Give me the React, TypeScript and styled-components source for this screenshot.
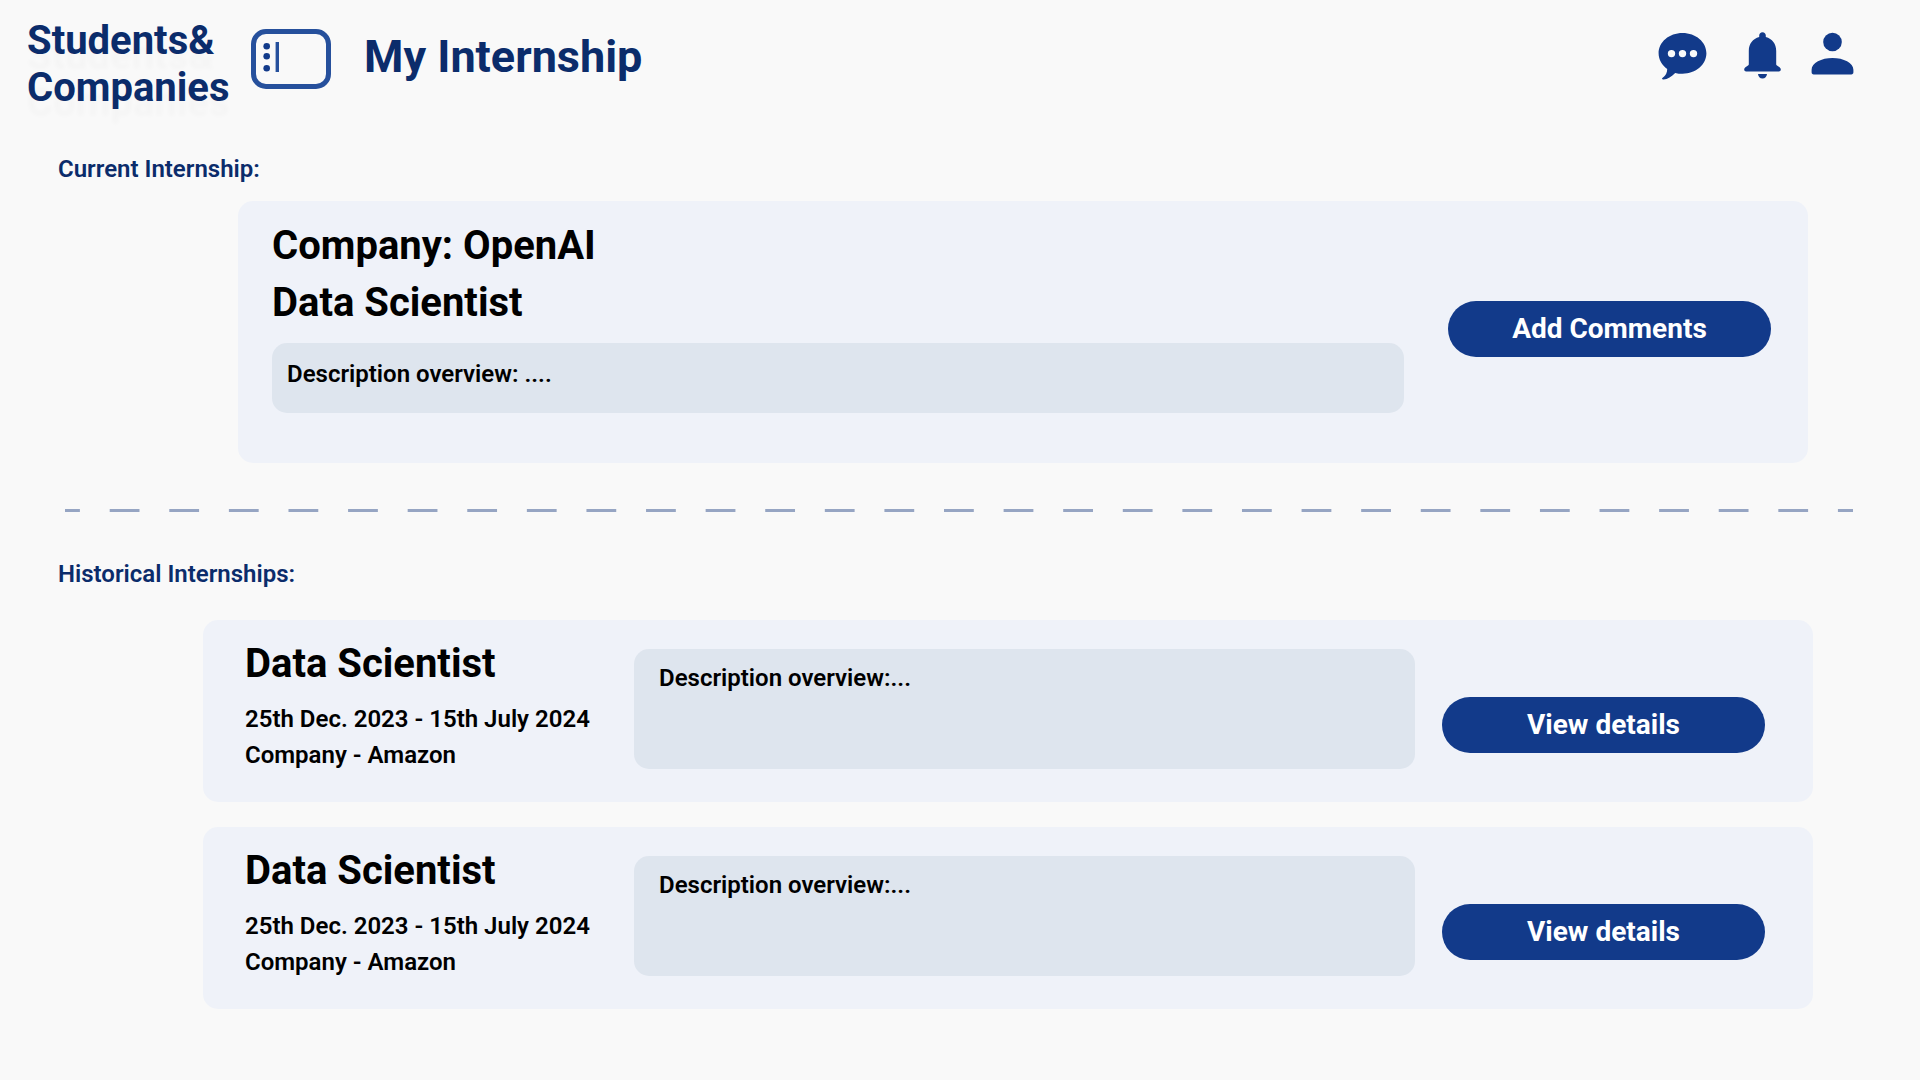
import React from "react";
import styled, { createGlobalStyle } from "styled-components";

const color = {
  page: "#f9f9f9",
  navy: "#0b2c6b",
  blue: "#123a8a",
  outline: "#26509c",
  card: "#eff2f9",
  panel: "#dee5ee",
  dash: "#96a5c3",
  text: "#000000",
};

const GlobalStyle = createGlobalStyle`
  *, *::before, *::after { box-sizing: border-box; }
  body {
    margin: 0;
    background: ${color.page};
    color: ${color.text};
    font-family: Roboto, "Liberation Sans", sans-serif;
  }
  h1, h2, h3, p { margin: 0; }
`;

const Header = styled.header`
  display: flex;
  align-items: flex-start;
  padding: 17px 66px 0 27px;
`;

const Brand = styled.p`
  width: 224px;
  color: ${color.navy};
  font-size: 40px;
  font-weight: 700;
  line-height: 47px;
  text-shadow: 0 15px 4px rgba(0, 0, 0, 0.02);
`;

const IconButton = styled.button`
  display: block;
  padding: 0;
  border: 0;
  background: none;
  color: ${color.blue};
  cursor: pointer;

  svg {
    display: block;
  }
`;

const MenuSlot = styled.div`
  margin: 12px 33px 0 0;
`;

const PageTitle = styled.h1`
  margin-top: 13px;
  color: ${color.navy};
  font-size: 45px;
  font-weight: 700;
  line-height: 54px;
`;

const Actions = styled.nav`
  display: flex;
  gap: 30px;
  margin: 15px 0 0 auto;
`;

const Section = styled.section`
  padding-top: ${(p: { $top: number }) => p.$top}px;
`;

const SectionTitle = styled.h2`
  padding-left: 58px;
  color: ${color.navy};
  font-size: 24px;
  font-weight: 600;
  line-height: 28px;
`;

const Divider = styled.hr`
  height: 3px;
  margin: 46px 67px 0 65px;
  border: 0;
  background-image: linear-gradient(
    90deg,
    ${color.dash} 15px,
    transparent 15px,
    transparent calc(100% - 15px),
    ${color.dash} calc(100% - 15px)
  );
  background-size: 60px 3px;
  background-repeat: round no-repeat;
`;

const Card = styled.article`
  display: flex;
  align-items: flex-start;
  border-radius: 15px;
  background: ${color.card};
`;

const CurrentCard = styled(Card)`
  gap: 44px;
  margin: 18px 112px 0 238px;
  padding: 16px 37px 50px 34px;
`;

const CurrentBody = styled.div`
  flex: 1;
`;

const CurrentHeading = styled.h3`
  font-size: 40px;
  font-weight: 700;
  line-height: 57px;
`;

const Overview = styled.p`
  border-radius: 15px;
  background: ${color.panel};
  font-size: 24px;
  font-weight: 600;
  line-height: 28px;
`;

const CurrentOverview = styled(Overview)`
  margin-top: 12px;
  padding: 17px 15px 25px;
`;

const PillButton = styled.button`
  width: 323px;
  height: 56px;
  margin-top: ${(p: { $top: number }) => p.$top}px;
  padding: 0;
  border: 0;
  border-radius: 28px;
  background: ${color.blue};
  color: #ffffff;
  font-family: inherit;
  font-size: 28px;
  font-weight: 700;
  line-height: 32px;
  cursor: pointer;
`;

const HistoryList = styled.div`
  display: grid;
  gap: 25px;
  margin: 32px 107px 0 203px;
  padding-bottom: 48px;
`;

const HistoryCard = styled(Card)`
  padding: 20px 48px 29px 42px;
`;

const HistorySummary = styled.div`
  width: 389px;
`;

const HistoryTitle = styled.h3`
  margin-bottom: 14px;
  font-size: 40px;
  font-weight: 700;
  line-height: 47px;
`;

const HistoryLine = styled.p`
  font-size: 24px;
  font-weight: 600;
  line-height: 36px;
`;

const HistoryOverview = styled(Overview)`
  flex: 1;
  min-height: 120px;
  margin: 9px 27px 0 0;
  padding: 15px 25px;
`;

function MenuIcon() {
  return (
    <svg width="80" height="60" viewBox="0 0 80 60" aria-hidden="true">
      <rect x="2.5" y="2.5" width="75" height="55" rx="12.5" fill="none" stroke={color.outline} strokeWidth="5" />
      <g fill="currentColor">
        <circle cx="15.7" cy="17.3" r="3.3" />
        <circle cx="15.7" cy="27.3" r="3.3" />
        <circle cx="15.7" cy="39.2" r="3.3" />
      </g>
      <path d="M26.3 13v30" stroke={color.outline} strokeWidth="3.4" />
    </svg>
  );
}

function ChatIcon() {
  return (
    <svg width="56" height="48" viewBox="0 0 56 48" aria-hidden="true">
      <path
        fill="currentColor"
        fillRule="evenodd"
        d="M24.5 1C37.8 1 48.4 10 48.4 21.3S37.8 41.7 24.5 41.7c-2.600 0-5-.2-7.300-.8-3.600 3.700-7.600 6.200-11.700 6.500-1.700.1-1.900-.8-.8-1.600 3-2.200 4.600-5.300 4.500-8.800C3.900 33.200.6 27.600.6 21.300.6 10 11.200 1 24.500 1ZM13.500 17.900a3.700 3.700 0 1 0 0 7.400 3.700 3.700 0 0 0 0-7.400Zm11 0a3.700 3.700 0 1 0 0 7.400 3.700 3.700 0 0 0 0-7.400Zm11 0a3.700 3.700 0 1 0 0 7.400 3.700 3.700 0 0 0 0-7.400Z"
      />
    </svg>
  );
}

function BellIcon() {
  return (
    <svg width="37" height="48" viewBox="6 0 37 48" aria-hidden="true">
      <path
        fill="currentColor"
        d="M24.500.3c1.900 0 3.300 1.400 3.300 3.200v1.500c6.400 1.700 10.400 7 10.400 13.700v13.500c0 .6.300 1 .8 1.400l2.200 1.500c1 .7 1.600 1.500 1.600 2.500 0 1.200-.8 2-2 2H8.200c-1.200 0-2-.8-2-2 0-1 .6-1.800 1.600-2.500l2.200-1.500c.5-.4.8-.8.8-1.400V18.700c0-6.700 4-12 10.400-13.700V3.500c0-1.800 1.400-3.200 3.300-3.200ZM20 42h9c-.2 2.700-2 4.600-4.500 4.600S20.200 44.700 20 42Z"
      />
    </svg>
  );
}

function ProfileIcon() {
  return (
    <svg width="43" height="48" viewBox="0 0 43 48" aria-hidden="true">
      <circle cx="21.500" cy="10" r="9.300" fill="currentColor" />
      <path
        fill="currentColor"
        d="M21.500 26c11 0 20.900 4.900 20.900 11.700v2.600c0 1.300-.8 2.100-2.100 2.100H2.700C1.400 42.400.6 41.600.6 40.300v-2.600C.6 30.900 10.500 26 21.500 26Z"
      />
    </svg>
  );
}

const history = [
  { id: 1, role: "Data Scientist", period: "25th Dec. 2023 - 15th July 2024", company: "Amazon" },
  { id: 2, role: "Data Scientist", period: "25th Dec. 2023 - 15th July 2024", company: "Amazon" },
];

export default function App() {
  return (
    <>
      <GlobalStyle />
      <Header>
        <Brand>
          Students&amp;
          <br />
          Companies
        </Brand>
        <MenuSlot>
          <IconButton type="button" aria-label="Toggle menu">
            <MenuIcon />
          </IconButton>
        </MenuSlot>
        <PageTitle>My Internship</PageTitle>
        <Actions>
          <IconButton type="button" aria-label="Messages">
            <ChatIcon />
          </IconButton>
          <IconButton type="button" aria-label="Notifications">
            <BellIcon />
          </IconButton>
          <IconButton type="button" aria-label="Profile">
            <ProfileIcon />
          </IconButton>
        </Actions>
      </Header>
      <main>
        <Section $top={44}>
          <SectionTitle>Current Internship:</SectionTitle>
          <CurrentCard>
            <CurrentBody>
              <CurrentHeading>Company: OpenAI</CurrentHeading>
              <CurrentHeading>Data Scientist</CurrentHeading>
              <CurrentOverview>Description overview: ....</CurrentOverview>
            </CurrentBody>
            <PillButton type="button" $top={84}>
              Add Comments
            </PillButton>
          </CurrentCard>
        </Section>
        <Divider />
        <Section $top={48}>
          <SectionTitle>Historical Internships:</SectionTitle>
          <HistoryList>
            {history.map((item) => (
              <HistoryCard key={item.id}>
                <HistorySummary>
                  <HistoryTitle>{item.role}</HistoryTitle>
                  <HistoryLine>{item.period}</HistoryLine>
                  <HistoryLine>Company - {item.company}</HistoryLine>
                </HistorySummary>
                <HistoryOverview>Description overview:...</HistoryOverview>
                <PillButton type="button" $top={57}>
                  View details
                </PillButton>
              </HistoryCard>
            ))}
          </HistoryList>
        </Section>
      </main>
    </>
  );
}
